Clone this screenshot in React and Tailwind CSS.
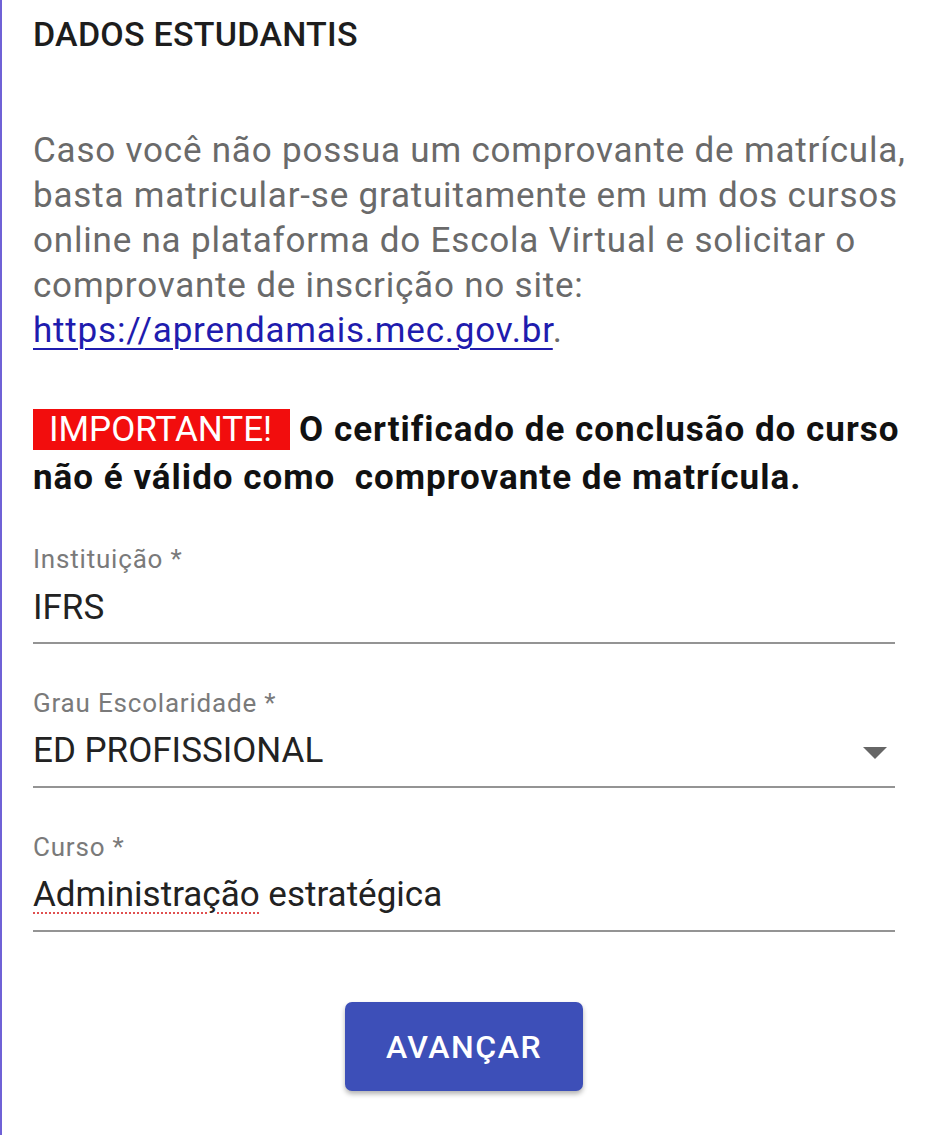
import { useState } from 'react';

export default function App() {
  const [instituicao, setInstituicao] = useState('IFRS');

  return (
    <div className="min-h-[1135px] w-[948px] bg-white border-l-2 border-[#6f61d6] font-['Roboto',sans-serif]">
      <div className="pl-[31px] pr-[53px] pt-[14px]">
        {/* header */}
        <h1 className="text-[34px] leading-[40px] font-medium text-[#1d1d1d] tracking-[0.25px]">DADOS ESTUDANTIS</h1>

        {/* info text */}
        <p className="mt-[74px] text-[35px] leading-[45px] text-[#6a6a6a] tracking-[0.8px] whitespace-nowrap">
          Caso você não possua um comprovante de matrícula,<br />
          basta matricular-se gratuitamente em um dos cursos<br />
          online na plataforma do Escola Virtual e solicitar o<br />
          comprovante de inscrição no site:<br />
          <a href="#" className="text-[#1f1cae] underline underline-offset-[6px] decoration-2">https://aprendamais.mec.gov.br</a>.
        </p>

        <p className="mt-[53px] text-[35px] leading-[48px] font-bold text-[#111] tracking-[1px] whitespace-nowrap">
          <span className="bg-[#f20d0d] text-white font-normal tracking-normal pl-[16px] pr-[18px] mr-[9px]">IMPORTANTE!</span>
          O certificado de conclusão do curso<br />
          não é válido como&nbsp; comprovante de matrícula.
        </p>

        {/* form */}
        <div className="mt-[42px] flex flex-col gap-[44px]">
          <div>
            <div className="text-[26px] leading-[30px] text-[#7a7a7a] tracking-[0.8px]">Instituição *</div>
            <input
              value={instituicao}
              onChange={(e) => setInstituicao(e.target.value)}
              className="block w-full bg-transparent outline-none text-[35px] leading-[44px] h-[59px] text-[#222] border-b-2 border-[#949494] pb-[13px] mt-[11px]"
            />
          </div>

          <div>
            <div className="text-[26px] leading-[30px] text-[#7a7a7a] tracking-[0.8px]">Grau Escolaridade *</div>
            <div className="flex items-center justify-between mt-[11px] border-b-2 border-[#949494] pb-[13px]">
              <span className="text-[35px] leading-[44px] text-[#222]">ED PROFISSIONAL</span>
              <svg width="24" height="12" viewBox="0 0 24 12" className="mr-[8px] mt-[4px]">
                <path d="M0 0 L24 0 L12 12 Z" fill="#666666" />
              </svg>
            </div>
          </div>

          <div>
            <div className="text-[26px] leading-[30px] text-[#7a7a7a] tracking-[0.8px]">Curso *</div>
            <div className="mt-[11px] border-b-2 border-[#949494] pb-[13px] text-[35px] leading-[44px] text-[#222]">
              <span className="underline decoration-dotted decoration-[#e05050] decoration-2 underline-offset-[6px]">Administração</span> estratégica
            </div>
          </div>
        </div>

        {/* action */}
        <div className="flex justify-center mt-[70px]">
          <button className="w-[238px] h-[89px] bg-[#3d4fb8] rounded-[7px] text-white text-[32px] font-medium tracking-[1.5px] shadow-[0_3px_5px_rgba(0,0,0,0.3)]">
            AVANÇAR
          </button>
        </div>
      </div>
    </div>
  );
}
